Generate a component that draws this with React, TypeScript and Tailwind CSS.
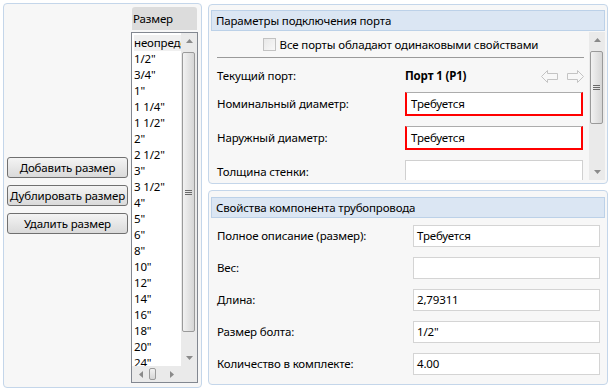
import type { ReactNode } from 'react';

const font = { fontFamily: '"Noto Sans", "Open Sans", sans-serif', letterSpacing: '-0.15px' };

const sizes = [
  'неопределено',
  '1/2"',
  '3/4"',
  '1"',
  '1 1/4"',
  '1 1/2"',
  '2"',
  '2 1/2"',
  '3"',
  '3 1/2"',
  '4"',
  '5"',
  '6"',
  '8"',
  '10"',
  '12"',
  '14"',
  '16"',
  '18"',
  '20"',
  '24"',
];

const bottomRows = [
  { label: 'Полное описание (размер):', value: 'Требуется' },
  { label: 'Вес:', value: '' },
  { label: 'Длина:', value: '2,79311' },
  { label: 'Размер болта:', value: '1/2"' },
  { label: 'Количество в комплекте:', value: '4.00' },
];

function Tri({ dir }: { dir: 'up' | 'down' | 'left' | 'right' }) {
  const pts = {
    up: '0,4 3.5,0 7,4',
    down: '0,0 7,0 3.5,4',
    left: '4,0 4,7 0,3.5',
    right: '0,0 0,7 4,3.5',
  }[dir];
  const vertical = dir === 'up' || dir === 'down';
  return (
    <svg width={vertical ? 7 : 4} height={vertical ? 4 : 7} viewBox={vertical ? '0 0 7 4' : '0 0 4 7'}>
      <polygon points={pts} fill="#8a8a8a" />
    </svg>
  );
}

function Grip() {
  return (
    <div className="flex flex-col gap-[1px]">
      {[0, 1, 2].map((i) => (
        <div key={i} className="h-[1px] w-[7px] bg-[#6a6a6a]" />
      ))}
    </div>
  );
}

function VScroll({ thumbTop, thumbHeight }: { thumbTop: number; thumbHeight: number }) {
  return (
    <div className="relative flex h-full w-[16px] shrink-0 flex-col items-center justify-between bg-[#eaeaea] py-[6px]">
      <Tri dir="up" />
      <div
        className="absolute left-[1px] flex w-[13px] items-center justify-center rounded-[2px] border border-[#9a9a9a] bg-gradient-to-r from-[#f2f2f2] to-[#d6d6d6]"
        style={{ top: thumbTop, height: thumbHeight }}
      >
        <Grip />
      </div>
      <Tri dir="down" />
    </div>
  );
}

function ArrowIcon({ flip = false }: { flip?: boolean }) {
  return (
    <svg width="17" height="13" viewBox="0 0 17 13" style={flip ? { transform: 'scaleX(-1)' } : undefined}>
      <polygon
        points="0.5,6.5 6.5,0.5 6.5,3.5 16.5,3.5 16.5,9.5 6.5,9.5 6.5,12.5"
        fill="#f8f8f8"
        stroke="#c4c4c4"
        strokeWidth="1"
      />
    </svg>
  );
}

function Btn({ children }: { children: ReactNode }) {
  return (
    <button
      type="button"
      className="flex h-[21px] w-[121px] items-center justify-center whitespace-nowrap rounded-[3px] border border-[#707070] bg-gradient-to-b from-[#f4f4f4] to-[#dadada] text-[11.5px] leading-none text-black"
    >
      {children}
    </button>
  );
}

function PanelHeader({ children }: { children: ReactNode }) {
  return (
    <div className="flex h-[21px] items-center border border-[#bcd1e8] bg-[#dbe6f3] pl-[4px] text-[11.5px] text-black">
      {children}
    </div>
  );
}

function ErrorInput() {
  return (
    <div className="flex h-[24px] w-[178px] items-center border-2 border-t border-[#ff0000] border-t-[#acacac] bg-white pl-[4px] text-[11.5px] text-black">
      Требуется
    </div>
  );
}

export default function App() {
  return (
    <div className="flex h-[390px] w-[615px] bg-white pl-[3px] pt-[3px] text-black" style={font}>
      {/* left: size list */}
      <div className="flex h-[385px] w-[199px] shrink-0 rounded-[4px] border border-[#c4d6ea] bg-[#f7f7f7] pb-[3px] pl-[3px] pr-[2px] pt-[3px]">
        <div className="flex w-[121px] flex-col justify-center gap-[7px]">
          <Btn>Добавить размер</Btn>
          <Btn>Дублировать размер</Btn>
          <Btn>Удалить размер</Btn>
        </div>
        <div className="ml-[3px] flex w-[67px] flex-col">
          <div className="mx-[1px] flex h-[23px] items-center rounded-t-[3px] bg-[#dcdcdc] pl-[1px] text-[11.5px]">
            Размер
          </div>
          <div className="mt-[2px] flex h-[351px] flex-col border border-[#828790] bg-white">
            <div className="flex min-h-0 flex-1">
              <div className="min-w-0 flex-1 overflow-hidden pl-[2px] pt-[2px]">
                {sizes.map((s, i) => (
                  <div
                    key={s}
                    className={`h-[16px] whitespace-nowrap text-[11.5px] leading-[16px] ${i === 0 ? 'bg-[#f0f0f0]' : ''}`}
                  >
                    {s}
                  </div>
                ))}
              </div>
              <VScroll thumbTop={19} thumbHeight={280} />
            </div>
            <div className="flex h-[16px] shrink-0">
              <div className="relative flex flex-1 items-center justify-between bg-[#eaeaea] px-[7px]">
                <Tri dir="left" />
                <div className="absolute left-[17px] top-[2px] h-[12px] w-[7px] rounded-[2px] border border-[#9a9a9a] bg-gradient-to-b from-[#f2f2f2] to-[#d6d6d6]" />
                <Tri dir="right" />
              </div>
              <div className="w-[16px] bg-[#eaeaea]" />
            </div>
          </div>
        </div>
      </div>

      {/* right column */}
      <div className="ml-[6px] flex w-[400px] flex-col pt-[1px]">
        <div className="flex h-[180px] flex-col rounded-[4px] border border-[#c4d6ea] bg-[#f7f7f7] px-[2px] pt-[5px]">
          <PanelHeader>Параметры подключения порта</PanelHeader>
          <div className="flex min-h-0 flex-1 pb-[3px] pt-[1px]">
            <div className="min-w-0 flex-1 overflow-hidden pl-[6px] pr-[5px] text-[11.5px]">
              <div className="flex h-[25px] items-center justify-center gap-[4px]">
                <div className="h-[13px] w-[13px] border border-[#c2c2c2] bg-gradient-to-br from-[#e8e8e8] to-[#f8f8f8]" />
                <span>Все порты обладают одинаковыми свойствами</span>
              </div>
              <div className="h-[1px] bg-[#9a9a9a]" />
              <div className="mt-[6px] flex h-[24px] items-center">
                <span className="w-[188px]">Текущий порт:</span>
                <span className="font-bold">Порт 1 (P1)</span>
                <div className="ml-auto flex items-center gap-[9px]">
                  <ArrowIcon />
                  <ArrowIcon flip />
                </div>
              </div>
              <div className="mt-[4px] flex items-center">
                <span className="w-[188px]">Номинальный диаметр:</span>
                <ErrorInput />
              </div>
              <div className="mt-[10px] flex items-center">
                <span className="w-[188px]">Наружный диаметр:</span>
                <ErrorInput />
              </div>
              <div className="mt-[10px] flex items-center">
                <span className="w-[188px]">Толщина стенки:</span>
                <div className="h-[24px] w-[178px] border border-[#d0d0d0] bg-white" />
              </div>
            </div>
            <VScroll thumbTop={19} thumbHeight={73} />
          </div>
        </div>

        <div className="mt-[6px] flex h-[195px] flex-col rounded-[4px] border border-[#c4d6ea] bg-[#f7f7f7] px-[2px] pt-[6px]">
          <PanelHeader>Свойства компонента трубопровода</PanelHeader>
          <div className="flex flex-col gap-[10px] pl-[6px] pt-[7px] text-[11.5px]">
            {bottomRows.map((r) => (
              <div key={r.label} className="flex items-center">
                <span className="w-[196px]">{r.label}</span>
                <div className="flex h-[22px] w-[187px] items-center border border-[#d4d4d4] bg-white pl-[3px]">
                  {r.value}
                </div>
              </div>
            ))}
          </div>
        </div>
      </div>
    </div>
  );
}
